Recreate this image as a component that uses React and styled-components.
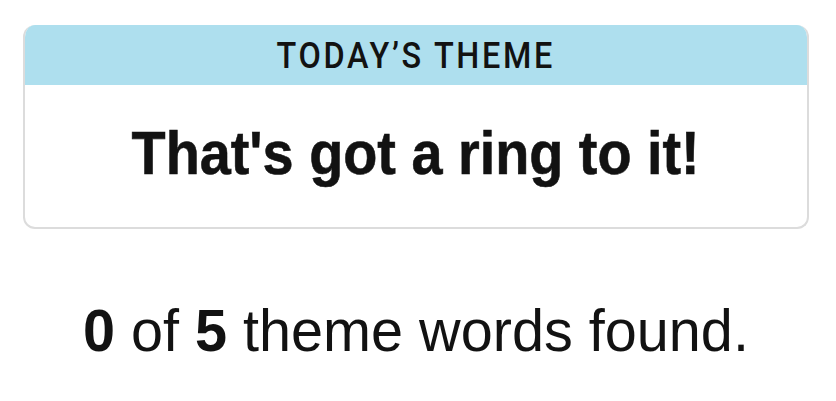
import React from 'react'
import styled, { createGlobalStyle } from 'styled-components'

const GlobalStyle = createGlobalStyle`
      body {
            margin: 0;
            background: #ffffff;
            font-family: 'Liberation Sans', Arial, sans-serif;
            color: #121212;
      }
`

const Page = styled.main`
      width: 836px;
      height: 401px;
      padding: 25px 27px 0 23px;
      box-sizing: border-box;
`

const Card = styled.section`
      border: 2px solid #dcdcdc;
      border-top: none;
      border-radius: 12px;
      overflow: hidden;
      height: 202px;
      display: flex;
      flex-direction: column;
`

const Header = styled.header`
      background: #aedfee;
      height: 60px;
      margin: 0 -2px;
      display: flex;
      align-items: center;
      justify-content: center;
`

const Condensed = styled.span`
      display: inline-block;
      transform: scaleX(${(p) => p.$squeeze});
      white-space: nowrap;
`

const HeaderLabel = styled(Condensed)`
      font-family: Roboto, 'Liberation Sans', sans-serif;
      font-size: 36px;
      font-weight: 500;
      letter-spacing: 3px;
      line-height: 1;
      padding-top: 2px;
`

const ThemeBody = styled.div`
      flex: 1;
      display: flex;
      align-items: center;
      justify-content: center;
      padding-bottom: 6px;
`

const ThemeTitle = styled(Condensed)`
      font-size: 62px;
      font-weight: 700;
      line-height: 1;
      -webkit-text-stroke: 0.6px #121212;
`

const Progress = styled.p`
      margin: 72px 0 0;
      text-align: center;
      font-size: 60px;
      line-height: 1;
`

const Count = styled.b`
      font-weight: 700;
`

export default function App() {
      return (
            <>
                  <GlobalStyle />
                  <Page>
                        <Card>
                              <Header>
                                    <HeaderLabel $squeeze={0.9}>TODAY’S THEME</HeaderLabel>
                              </Header>
                              <ThemeBody>
                                    <ThemeTitle $squeeze={0.9}>That's got a ring to it!</ThemeTitle>
                              </ThemeBody>
                        </Card>
                        <Progress>
                              <Condensed $squeeze={0.96}>
                                    <Count>0</Count> of <Count>5</Count> theme words found.
                              </Condensed>
                        </Progress>
                  </Page>
            </>
      )
}
